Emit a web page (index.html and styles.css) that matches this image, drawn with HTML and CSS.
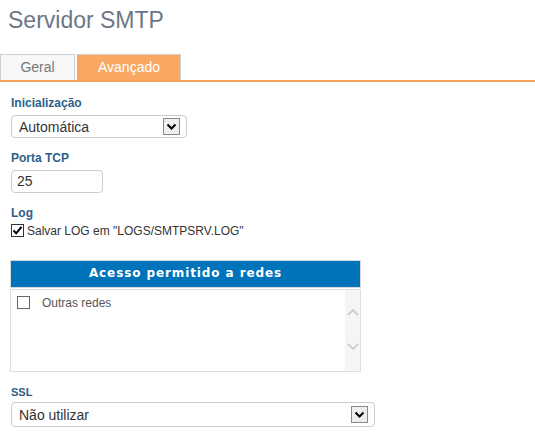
FILE: index.html
```html
<!DOCTYPE html>
<html lang="pt">
<head>
<meta charset="utf-8">
<title>Servidor SMTP</title>
<link rel="stylesheet" href="styles.css">
</head>
<body>
<h1 class="title">Servidor SMTP</h1>
<div class="tabs">
  <div class="tab tab-geral">Geral</div>
  <div class="tab tab-active">Avançado</div>
</div>
<div class="content">
  <div class="field field-init">
    <div class="label">Inicialização</div>
    <div class="select select-init">
      <span class="select-text">Automática</span>
      <span class="arrow"><svg width="15" height="15" viewBox="0 0 15 15"><path d="M3.5 5.5 L7.5 9.5 L11.5 5.5" fill="none" stroke="#000" stroke-width="2"/></svg></span>
    </div>
  </div>
  <div class="field field-port">
    <div class="label">Porta TCP</div>
    <div class="input">25</div>
  </div>
  <div class="field field-log">
    <div class="label">Log</div>
    <div class="check-row">
      <span class="checkbox checked"><svg width="11" height="11" viewBox="0 0 11 11"><path d="M1.5 5.5 L4.2 8.3 L9.5 1.8" fill="none" stroke="#000" stroke-width="2"/></svg></span>
      <span class="check-text">Salvar LOG em "LOGS/SMTPSRV.LOG"</span>
    </div>
  </div>
  <div class="net-table">
    <div class="net-head">Acesso permitido a redes</div>
    <div class="net-list">
      <div class="net-items">
        <div class="net-item">
          <span class="checkbox-small"></span>
          <span class="net-text">Outras redes</span>
        </div>
      </div>
      <div class="scrollbar">
        <svg class="sc-up" width="12" height="8" viewBox="0 0 12 8"><path d="M1 7 L6 2 L11 7" fill="none" stroke="#c4c4c4" stroke-width="1.5"/></svg>
        <svg class="sc-down" width="12" height="8" viewBox="0 0 12 8"><path d="M1 1 L6 6 L11 1" fill="none" stroke="#c4c4c4" stroke-width="1.5"/></svg>
      </div>
    </div>
  </div>
  <div class="field field-ssl">
    <div class="label label-ssl">SSL</div>
    <div class="select select-ssl">
      <span class="select-text">Não utilizar</span>
      <span class="arrow"><svg width="15" height="15" viewBox="0 0 15 15"><path d="M3.5 5.5 L7.5 9.5 L11.5 5.5" fill="none" stroke="#000" stroke-width="2"/></svg></span>
    </div>
  </div>
</div>
</body>
</html>
```
FILE: styles.css
```css
html, body {
  margin: 0;
  padding: 0;
  background: #fff;
}
body {
  font-family: "Liberation Sans", Arial, sans-serif;
  color: #333;
}
.title {
  margin: 0;
  padding: 6px 0 0 8px;
  font-size: 23px;
  line-height: 28px;
  font-weight: normal;
  color: #6b7786;
}
.tabs {
  display: flex;
  margin-top: 20px;
  border-bottom: 2px solid #f5a45c;
  height: 26px;
}
.tab {
  box-sizing: border-box;
  height: 26px;
  border: 1px solid #cfcfcf;
  border-bottom: 0;
  font-size: 14px;
  line-height: 25px;
  text-align: center;
}
.tab-geral {
  width: 75px;
  background: #f8f8f8;
  color: #777;
}
.tab-active {
  width: 104px;
  margin-left: 2px;
  background: #f8a862;
  border-left-color: #f8a862;
  color: #fff;
}
.content {
  padding-left: 11px;
}
.field-init { margin-top: 14px; }
.field-port { margin-top: 13px; }
.field-log { margin-top: 13px; }
.field-ssl { margin-top: 14px; }
.label {
  font-size: 12px;
  line-height: 14px;
  font-weight: bold;
  color: #2c6089;
  margin-bottom: 5px;
}
.label-ssl {
  font-size: 11px;
  line-height: 13px;
  margin-bottom: 3px;
}
.select {
  box-sizing: border-box;
  display: flex;
  align-items: center;
  border: 1px solid #cccccc;
  border-radius: 4px;
  background: #fff;
  font-size: 14px;
  color: #333;
  padding-left: 7px;
  padding-right: 6px;
}
.select-init {
  width: 176px;
  height: 23px;
}
.select-ssl {
  width: 364px;
  height: 25px;
}
.select-text {
  flex: 1;
}
.arrow {
  box-sizing: border-box;
  width: 17px;
  height: 17px;
  border: 1px solid #8a8a8a;
  background: #eeeeee;
  display: flex;
  align-items: center;
  justify-content: center;
}
.arrow svg { display: block; }
.input {
  box-sizing: border-box;
  width: 92px;
  height: 23px;
  border: 1px solid #cccccc;
  border-radius: 4px;
  font-size: 14px;
  line-height: 21px;
  padding-left: 5px;
  color: #333;
}
.check-row {
  display: flex;
  align-items: flex-start;
  margin-top: -2px;
  line-height: 16px;
  font-size: 12px;
  color: #333;
}
.checkbox {
  box-sizing: border-box;
  width: 13px;
  height: 13px;
  margin-top: 1px;
  border: 1px solid #333;
  background: #fff;
  display: flex;
  align-items: center;
  justify-content: center;
}
.checkbox svg { display: block; }
.check-text {
  margin-left: 3px;
}
.net-table {
  margin-left: -1px;
  margin-top: 21px;
  width: 351px;
}
.net-head {
  box-sizing: border-box;
  height: 28px;
  border: 1px solid #d8d8d8;
  background: #0074bb;
  color: #fff;
  font-family: "DejaVu Sans", Verdana, sans-serif;
  font-weight: bold;
  font-size: 12px;
  letter-spacing: 0.9px;
  line-height: 25px;
  text-align: center;
}
.net-list {
  box-sizing: border-box;
  margin-top: 1px;
  height: 83px;
  border: 1px solid #dedede;
  display: flex;
}
.net-items {
  flex: 1;
  padding: 6px 0 0 6px;
}
.net-item {
  display: flex;
  align-items: flex-start;
  font-size: 12px;
  line-height: 14px;
  color: #555;
}
.checkbox-small {
  box-sizing: border-box;
  width: 13px;
  height: 13px;
  border: 1px solid #666;
  background: #fff;
  margin-top: 0;
}
.net-text {
  margin-left: 12px;
}
.scrollbar {
  width: 15px;
  background: #f5f5f5;
  display: flex;
  flex-direction: column;
  align-items: center;
}
.scrollbar svg { display: block; }
.sc-up { margin-top: 18px; }
.sc-down { margin-top: 27px; }
```
